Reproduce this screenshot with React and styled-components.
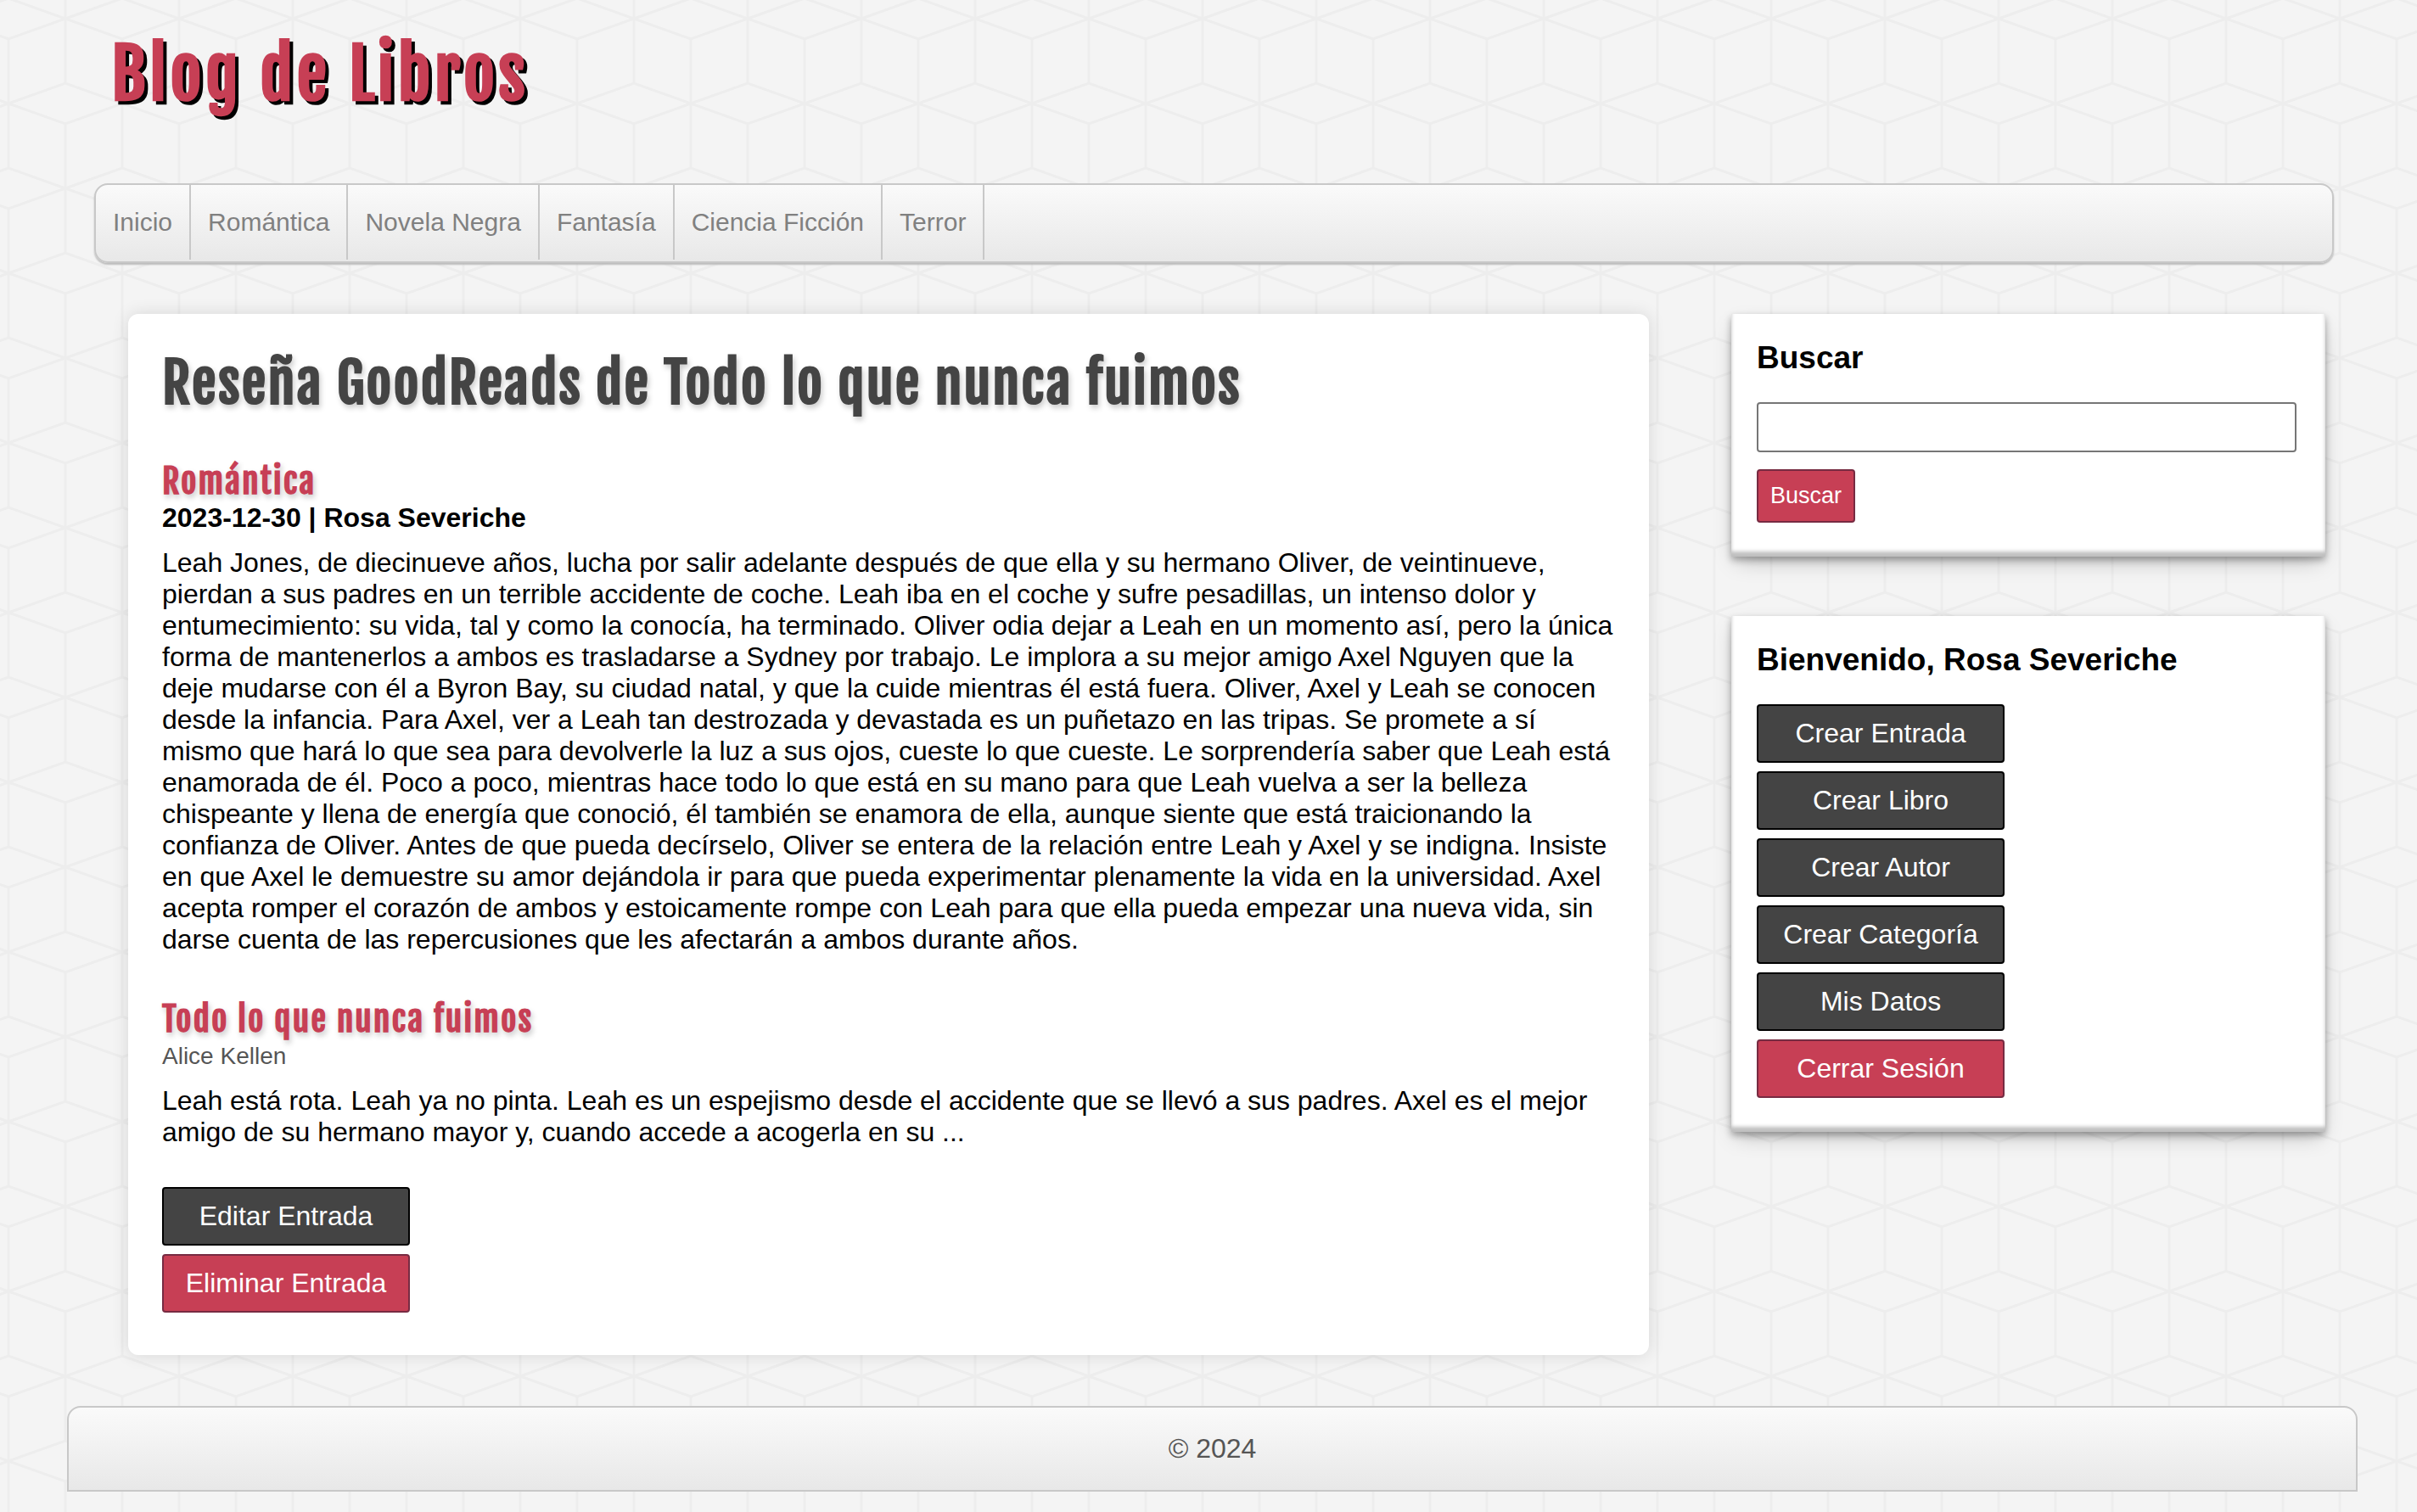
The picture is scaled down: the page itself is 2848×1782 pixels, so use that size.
import React from "react";
import styled, { createGlobalStyle, css } from "styled-components";

const colors = {
  accent: "#c73f55",
  accentDark: "#772b42",
  dark: "#444444",
  line: "#c8c8c8",
  bg: "#f4f4f4",
};

// Repeating tile: rows of flat diamonds joined by vertical lines.
const diamond = (x, y) => `M${x - 67} ${y}L${x} ${y - 24}L${x + 67} ${y}L${x} ${y + 24}Z`;

const pattern = encodeURIComponent(
  `<svg xmlns="http://www.w3.org/2000/svg" width="134" height="200" fill="none" stroke="#ededed" stroke-width="3">
    <path d="${diamond(10, 22)}${diamond(144, 22)}${diamond(77, 122)}${diamond(-57, 122)}${diamond(10, 222)}${diamond(144, 222)}"/>
    <path d="M77 0V98M77 146V200M10 46V198"/>
  </svg>`
);

const GlobalStyle = createGlobalStyle`
  *, *::before, *::after { box-sizing: border-box; }
  body {
    margin: 0;
    background: ${colors.bg} url("data:image/svg+xml,${pattern}");
    font-family: "Liberation Sans", Arial, Helvetica, sans-serif;
    font-size: 32px;
    line-height: 37px;
    color: #000;
  }
  h1, h2, h3, p, ul { margin: 0; padding: 0; }
`;

const displayFont = css`
  font-family: "Fjalla One", "Open Sans Condensed", "Liberation Sans", sans-serif;
  font-weight: bold;
  letter-spacing: 2px;
`;

const barBackground = css`
  border: 2px solid ${colors.line};
  background: linear-gradient(to bottom, #fafafa, #e8e8e8);
`;

const Page = styled.div`
  padding: 24px 70px 24px 79px;
`;

const Header = styled.header`
  padding: 0 28px 0 32px;
`;

const Logo = styled.h1`
  ${displayFont}
  height: 192px;
  padding: 0 20px;
  font-size: 81px;
  line-height: 126px;
  letter-spacing: 4px;
  a {
    color: ${colors.accent};
    text-decoration: none;
    text-shadow: 4px 4px 0 #000;
  }
`;

const Nav = styled.nav`
  ${barBackground}
  height: 94px;
  border-radius: 16px;
  box-shadow: 0 2px 2px #bbb;
  overflow: hidden;
`;

const Menu = styled.ul`
  display: flex;
  list-style: none;
`;

const MenuLink = styled.a`
  display: block;
  padding: 0 20px;
  border-right: 2px solid ${colors.line};
  font-size: 30px;
  line-height: 88px;
  color: #808080;
  text-decoration: none;
`;

const Columns = styled.div`
  display: grid;
  grid-template-columns: minmax(0, 1792fr) minmax(0, 700fr);
  column-gap: 97px;
  align-items: start;
  padding: 60px 38px 60px 72px;
`;

const Article = styled.article`
  padding: 40px 40px 50px;
  border-radius: 12px;
  background: #fff;
  box-shadow: 0 0 20px rgba(0, 0, 0, 0.12);
`;

const Title = styled.h1`
  ${displayFont}
  font-size: 65px;
  line-height: 82px;
  color: ${colors.dark};
  text-shadow: 2px 4px 6px #ccc;
`;

const Subtitle = styled.h2`
  ${displayFont}
  margin-top: 50px;
  font-size: 40px;
  line-height: 50px;
  text-shadow: 2px 4px 6px #ccc;
  a {
    color: ${colors.accent};
    text-decoration: none;
  }
`;

const Meta = styled.h3`
  font-size: 32px;
  line-height: 37px;
`;

const Author = styled.p`
  font-size: 28px;
  line-height: 37px;
  color: #555;
`;

const Paragraph = styled.p`
  margin-top: 16px;
`;

const Actions = styled.div`
  display: flex;
  flex-direction: column;
  align-items: flex-start;
  gap: 10px;
  margin-top: ${(p) => p.$gap};
`;

const ActionLink = styled.a`
  width: 292px;
  padding: 14px 0;
  border: 2px solid ${(p) => (p.$danger ? colors.accentDark : "#000")};
  border-radius: 4px;
  background: ${(p) => (p.$danger ? colors.accent : colors.dark)};
  color: #fff;
  text-align: center;
  text-decoration: none;
`;

const Sidebar = styled.aside`
  display: grid;
  gap: 70px;
`;

const Panel = styled.section`
  padding: 30px 34px 40px 30px;
  background: #fff;
  box-shadow:
    0 4px 8px rgba(0, 0, 0, 0.3),
    0 10px 24px -6px rgba(0, 0, 0, 0.25),
    inset 0 -6px 4px rgba(0, 0, 0, 0.25);
`;

const PanelTitle = styled.h3`
  font-size: 37px;
  line-height: 44px;
`;

const SearchForm = styled.form`
  display: grid;
  justify-items: start;
  gap: 20px;
  margin-top: 30px;
`;

const SearchInput = styled.input`
  width: 100%;
  height: 59px;
  padding: 0 10px;
  border: 2px solid #767676;
  border-radius: 4px;
  background: #fff;
  font: inherit;
`;

const SearchButton = styled.button`
  height: 63px;
  padding: 0 14px;
  border: 2px solid ${colors.accentDark};
  border-radius: 4px;
  background: ${colors.accent};
  color: #fff;
  font-family: inherit;
  font-size: 27px;
`;

const Footer = styled.footer`
  ${barBackground}
  padding: 30px 0;
  border-radius: 16px 16px 0 0;
  color: #555;
  text-align: center;
`;

const categories = ["Inicio", "Romántica", "Novela Negra", "Fantasía", "Ciencia Ficción", "Terror"];
const userActions = ["Crear Entrada", "Crear Libro", "Crear Autor", "Crear Categoría", "Mis Datos"];

export default function App() {
  return (
    <Page>
      <GlobalStyle />
      <Header>
        <Logo>
          <a href="#inicio">Blog de Libros</a>
        </Logo>
        <Nav>
          <Menu>
            {categories.map((name) => (
              <li key={name}>
                <MenuLink href="#categoria">{name}</MenuLink>
              </li>
            ))}
          </Menu>
        </Nav>
      </Header>

      <Columns>
        <Article>
          <Title>Reseña GoodReads de Todo lo que nunca fuimos</Title>
          <Subtitle>
            <a href="#romantica">Romántica</a>
          </Subtitle>
          <Meta>2023-12-30 | Rosa Severiche</Meta>
          <Paragraph>
            Leah Jones, de diecinueve años, lucha por salir adelante después de que ella y su hermano
            Oliver, de veintinueve, pierdan a sus padres en un terrible accidente de coche. Leah iba
            en el coche y sufre pesadillas, un intenso dolor y entumecimiento: su vida, tal y como la
            conocía, ha terminado. Oliver odia dejar a Leah en un momento así, pero la única forma de
            mantenerlos a ambos es trasladarse a Sydney por trabajo. Le implora a su mejor amigo Axel
            Nguyen que la deje mudarse con él a Byron Bay, su ciudad natal, y que la cuide mientras él
            está fuera. Oliver, Axel y Leah se conocen desde la infancia. Para Axel, ver a Leah tan
            destrozada y devastada es un puñetazo en las tripas. Se promete a sí mismo que hará lo que
            sea para devolverle la luz a sus ojos, cueste lo que cueste. Le sorprendería saber que
            Leah está enamorada de él. Poco a poco, mientras hace todo lo que está en su mano para que
            Leah vuelva a ser la belleza chispeante y llena de energía que conoció, él también se
            enamora de ella, aunque siente que está traicionando la confianza de Oliver. Antes de que
            pueda decírselo, Oliver se entera de la relación entre Leah y Axel y se indigna. Insiste
            en que Axel le demuestre su amor dejándola ir para que pueda experimentar plenamente la
            vida en la universidad. Axel acepta romper el corazón de ambos y estoicamente rompe con
            Leah para que ella pueda empezar una nueva vida, sin darse cuenta de las repercusiones que
            les afectarán a ambos durante años.
          </Paragraph>
          <Subtitle>
            <a href="#libro">Todo lo que nunca fuimos</a>
          </Subtitle>
          <Author>Alice Kellen</Author>
          <Paragraph>
            Leah está rota. Leah ya no pinta. Leah es un espejismo desde el accidente que se llevó a
            sus padres. Axel es el mejor amigo de su hermano mayor y, cuando accede a acogerla en su
            ...
          </Paragraph>
          <Actions $gap="46px">
            <ActionLink href="#editar">Editar Entrada</ActionLink>
            <ActionLink href="#eliminar" $danger>
              Eliminar Entrada
            </ActionLink>
          </Actions>
        </Article>

        <Sidebar>
          <Panel>
            <PanelTitle id="buscar-titulo">Buscar</PanelTitle>
            <SearchForm onSubmit={(event) => event.preventDefault()}>
              <SearchInput type="text" name="busqueda" aria-labelledby="buscar-titulo" />
              <SearchButton type="submit">Buscar</SearchButton>
            </SearchForm>
          </Panel>
          <Panel>
            <PanelTitle>Bienvenido, Rosa Severiche</PanelTitle>
            <Actions $gap="30px">
              {userActions.map((name) => (
                <ActionLink key={name} href="#cuenta">
                  {name}
                </ActionLink>
              ))}
              <ActionLink href="#salir" $danger>
                Cerrar Sesión
              </ActionLink>
            </Actions>
          </Panel>
        </Sidebar>
      </Columns>

      <Footer>© 2024</Footer>
    </Page>
  );
}
